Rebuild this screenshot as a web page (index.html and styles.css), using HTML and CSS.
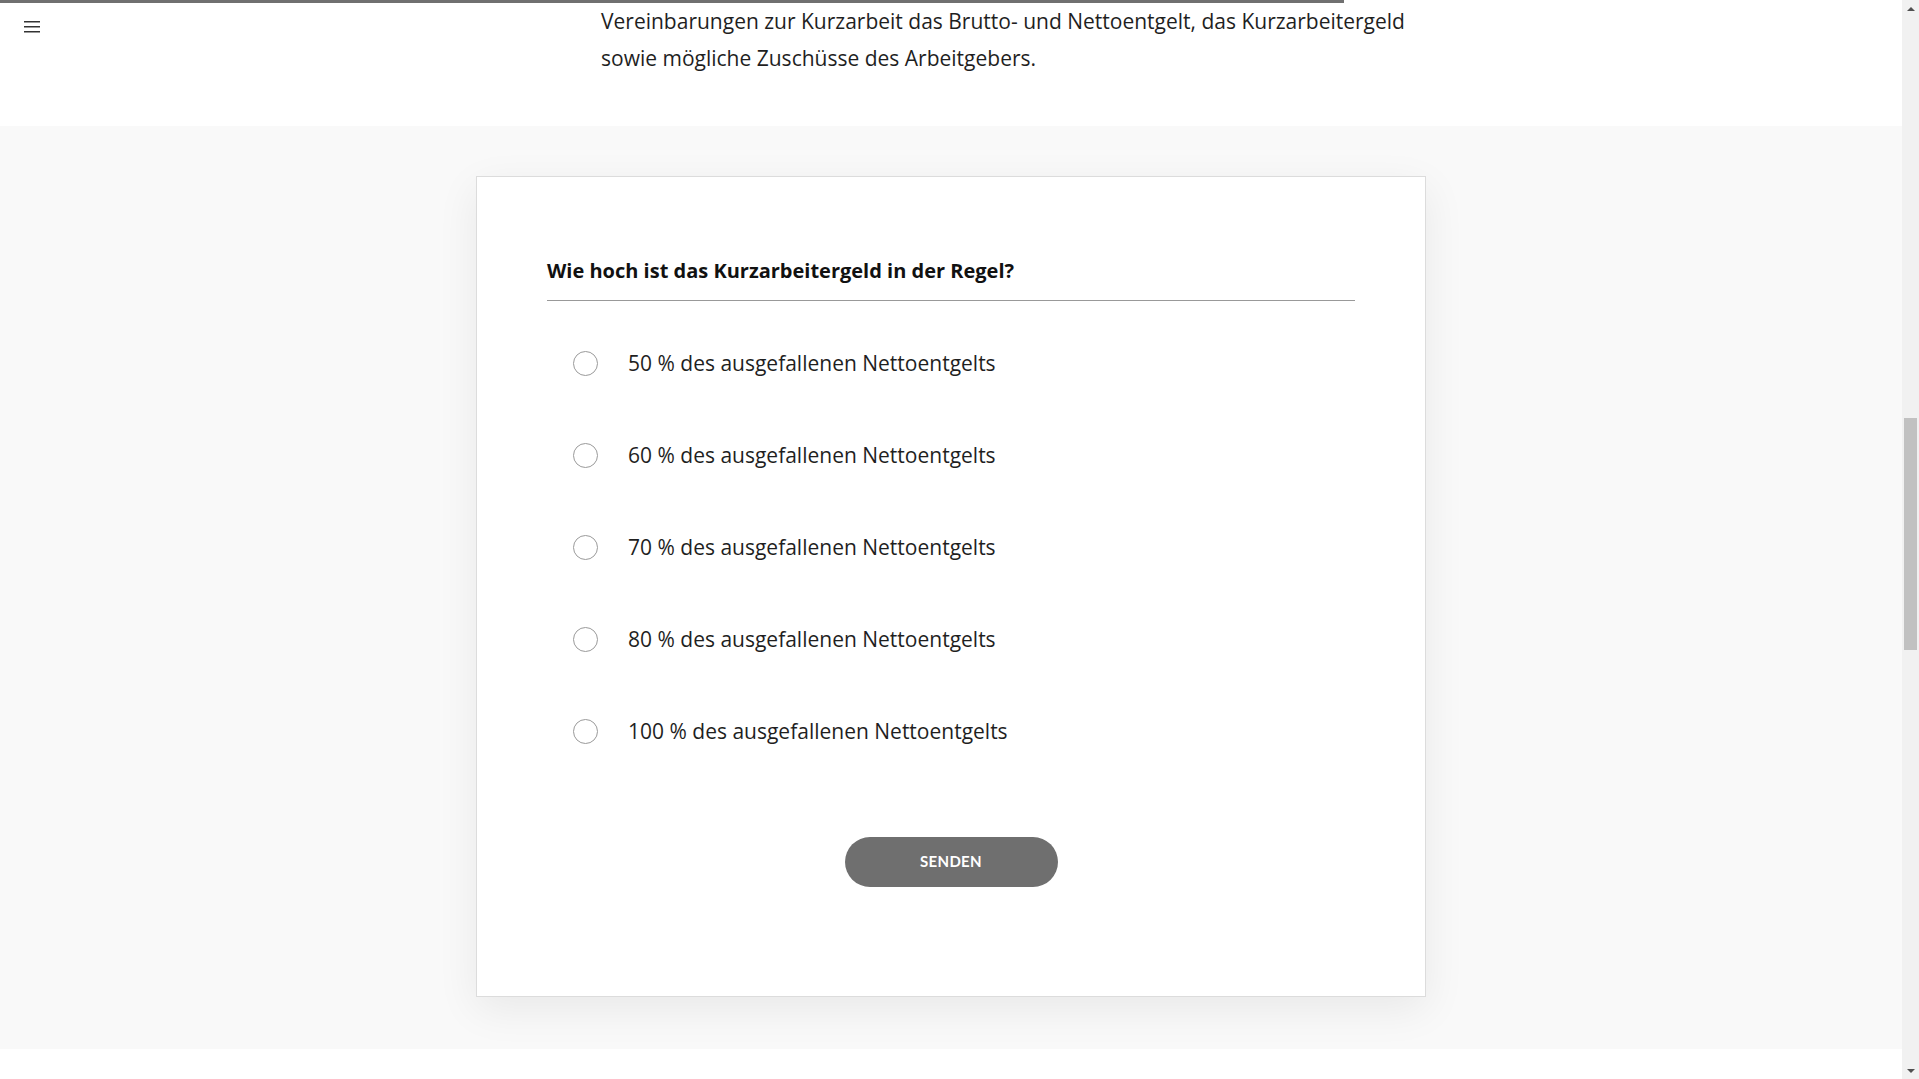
FILE: index.html
```html
<!DOCTYPE html>
<html lang="de">
<head>
<meta charset="utf-8">
<title>Kurzarbeitergeld Quiz</title>
<link rel="stylesheet" href="styles.css">
</head>
<body>
<div class="window">
  <div class="page">
    <div class="progress"><div class="progress-fill"></div></div>
    <button class="menu-btn" aria-label="Menü">
      <svg width="16" height="14" viewBox="0 0 16 14"><rect x="0" y="1" width="16" height="1.5" fill="#333"/><rect x="0" y="6" width="16" height="1.5" fill="#333"/><rect x="0" y="11" width="16" height="1.5" fill="#333"/></svg>
    </button>
    <section class="intro">
      <p class="intro-text">Vereinbarungen zur Kurzarbeit das Brutto- und Nettoentgelt, das Kurzarbeitergeld sowie mögliche Zuschüsse des Arbeitgebers.</p>
    </section>
    <section class="quiz-section">
      <div class="card">
        <h2 class="question">Wie hoch ist das Kurzarbeitergeld in der Regel?</h2>
        <ul class="options">
          <li class="option"><span class="radio"></span><span class="label">50 % des ausgefallenen Nettoentgelts</span></li>
          <li class="option"><span class="radio"></span><span class="label">60 % des ausgefallenen Nettoentgelts</span></li>
          <li class="option"><span class="radio"></span><span class="label">70 % des ausgefallenen Nettoentgelts</span></li>
          <li class="option"><span class="radio"></span><span class="label">80 % des ausgefallenen Nettoentgelts</span></li>
          <li class="option"><span class="radio"></span><span class="label">100 % des ausgefallenen Nettoentgelts</span></li>
        </ul>
        <div class="actions"><button class="send">SENDEN</button></div>
      </div>
    </section>
    <section class="after"></section>
  </div>
  <div class="scrollbar">
    <div class="sb-arrow sb-up"></div>
    <div class="sb-track"><div class="sb-space-top"></div><div class="sb-thumb"></div></div>
    <div class="sb-arrow sb-down"></div>
  </div>
</div>
</body>
</html>
```
FILE: styles.css
```css
*, *::before, *::after {
  box-sizing: border-box;
}
html, body {
  margin: 0;
  padding: 0;
  height: 100%;
  overflow: hidden;
}
body {
  font-family: "Open Sans", "Noto Sans", sans-serif;
  color: #1f1f1f;
  background: #fff;
}
.window {
  display: flex;
  height: 1079px;
}
.page {
  flex: 1;
  min-width: 0;
  position: relative;
  overflow: hidden;
}
.progress {
  position: absolute;
  top: 0;
  left: 0;
  right: 0;
  height: 3px;
  z-index: 5;
}
.progress-fill {
  width: 1344px;
  height: 3px;
  background: #707070;
}
.menu-btn {
  position: absolute;
  top: 20px;
  left: 24px;
  width: 16px;
  height: 16px;
  padding: 0;
  border: 0;
  background: transparent;
  z-index: 5;
}
.intro {
  padding: 3px 0 49px 601px;
}
.intro-text {
  margin: 0;
  width: 840px;
  font-size: 21px;
  line-height: 37px;
  color: #1f1f1f;
}
.quiz-section {
  background: #f9f9f9;
  padding: 50px 0 52px;
  display: flex;
  justify-content: center;
}
.card {
  width: 950px;
  background: #fff;
  border: 1px solid #dcdcdc;
  box-shadow: 0 12px 40px rgba(0, 0, 0, 0.07);
  padding: 80px 70px 109px;
}
.question {
  margin: 0;
  font-size: 20px;
  line-height: 28px;
  font-weight: 700;
  color: #111;
  padding-bottom: 15px;
  border-bottom: 1px solid #999;
}
.options {
  list-style: none;
  margin: 0;
  padding: 16px 0 0;
}
.option {
  height: 92px;
  display: flex;
  align-items: center;
  padding-left: 26px;
}
.radio {
  width: 25px;
  height: 25px;
  border: 1px solid #9a9a9a;
  border-radius: 50%;
  flex: none;
}
.label {
  margin-left: 30px;
  font-size: 21px;
  color: #1f1f1f;
}
.actions {
  display: flex;
  justify-content: center;
  padding-top: 60px;
}
.send {
  width: 213px;
  height: 50px;
  border: 0;
  border-radius: 25px;
  background: #6f6f6f;
  color: #fff;
  font-family: Lato, "Open Sans", sans-serif;
  font-weight: 700;
  font-size: 15px;
  letter-spacing: 0.3px;
  padding: 0 0 2px;
}
.after {
  height: 40px;
  background: #fff;
}
.scrollbar {
  width: 17px;
  flex: none;
  background: #f1f1f1;
  display: flex;
  flex-direction: column;
}
.sb-arrow {
  height: 17px;
  display: flex;
  align-items: center;
  justify-content: center;
}
.sb-up::before {
  content: "";
  border-left: 4px solid transparent;
  border-right: 4px solid transparent;
  border-bottom: 4px solid #505050;
}
.sb-down::before {
  content: "";
  border-left: 4px solid transparent;
  border-right: 4px solid transparent;
  border-top: 4px solid #505050;
}
.sb-track {
  flex: 1;
  display: flex;
  flex-direction: column;
  align-items: center;
}
.sb-space-top {
  height: 401px;
}
.sb-thumb {
  width: 13px;
  height: 232px;
  background: #c1c1c1;
}
```
